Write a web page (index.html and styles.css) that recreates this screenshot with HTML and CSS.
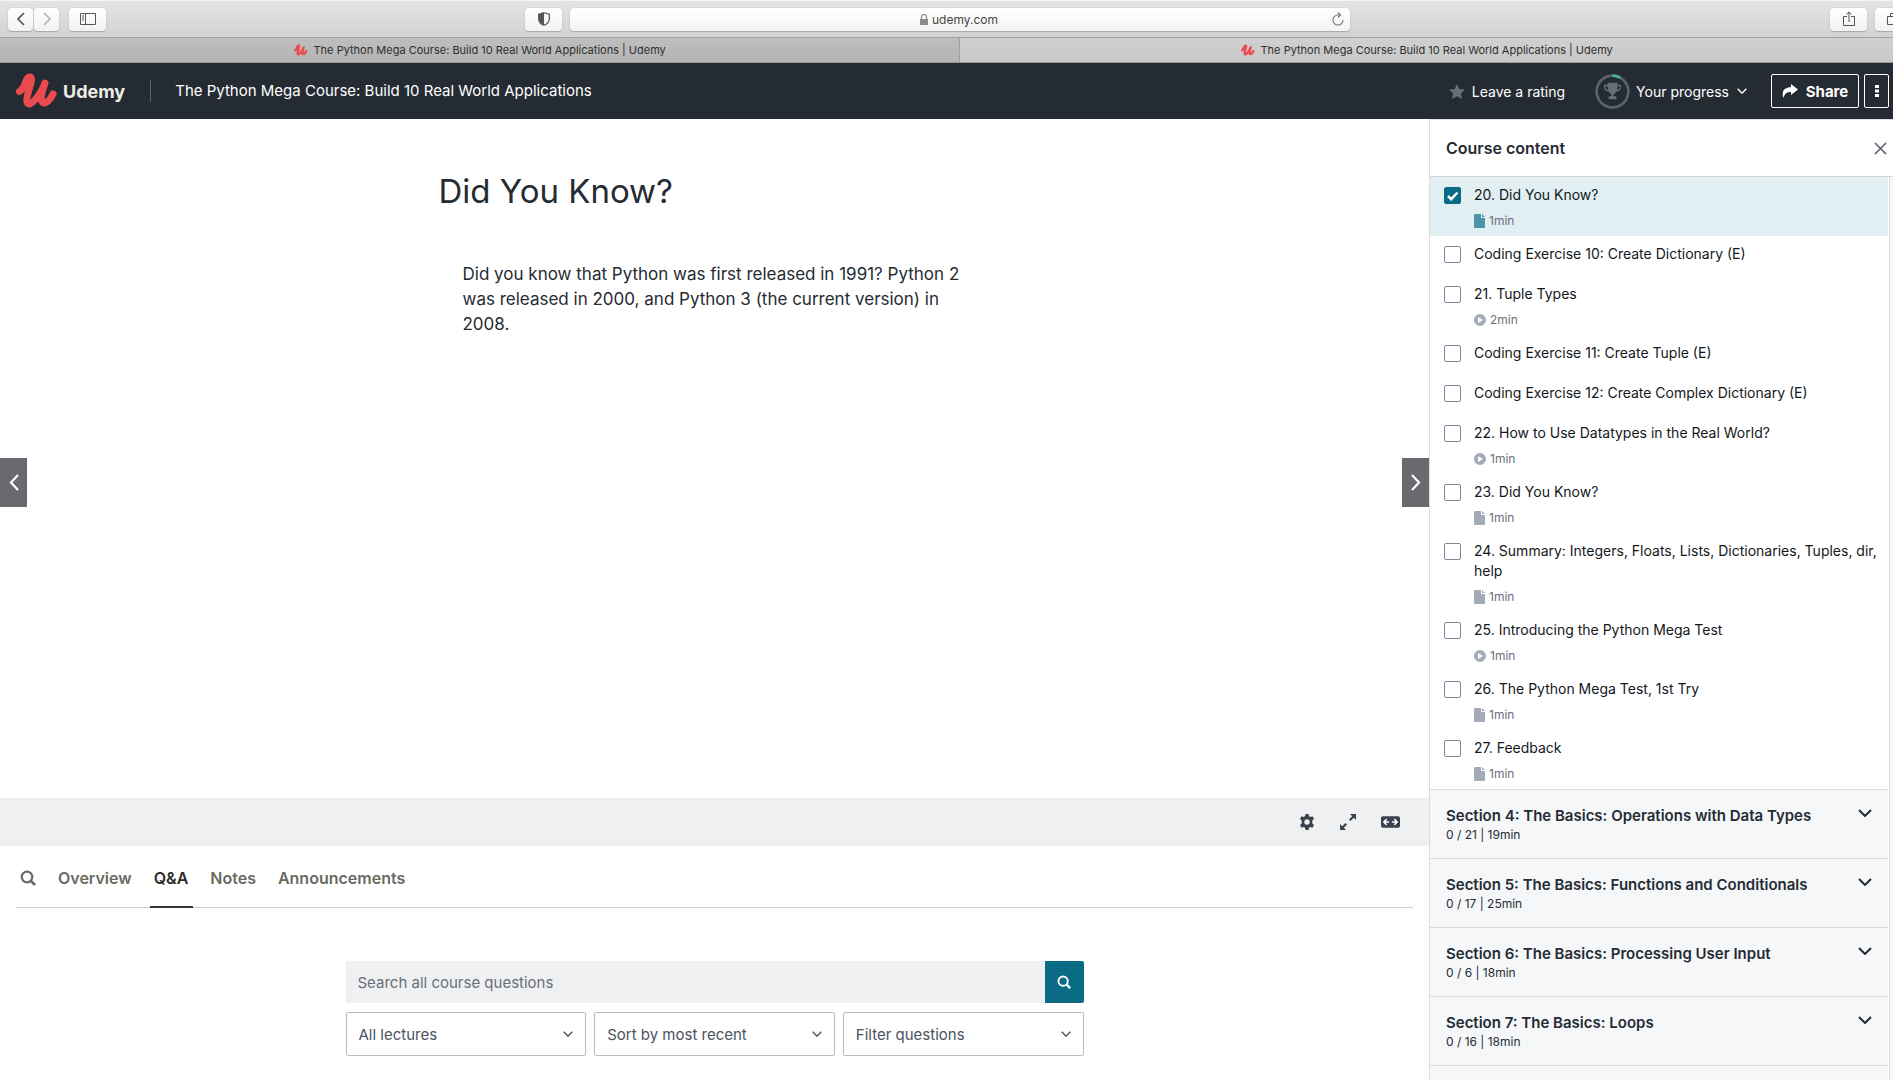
FILE: index.html
```html
<!DOCTYPE html>
<html lang="en">
<head>
<meta charset="utf-8">
<title>The Python Mega Course: Build 10 Real World Applications | Udemy</title>
<link rel="stylesheet" href="styles.css">
</head>
<body>
<svg class="sprite" aria-hidden="true">
  <symbol id="udemy-u" viewBox="0 0 42 36"><path d="M3.500 18.500C10 15 9 4 14 4c5 1-5 19-3 25 2 7 13-6 18-19-3 8-6 19-1 20 4 0 7-5 9-9" fill="none" stroke="#eb4a4e" stroke-width="7" stroke-linecap="round" stroke-linejoin="round"/></symbol>
  <symbol id="file" viewBox="0 0 11 14"><path d="M1 0h6v4h4v9q0 1-1 1H1q-1 0-1-1V1q0-1 1-1zM8 0l3 3H8z" fill="currentColor"/></symbol>
  <symbol id="play" viewBox="0 0 12 12"><path fill-rule="evenodd" d="M6 0a6 6 0 1 1 0 12A6 6 0 0 1 6 0zM4 3v6l5-3z" fill="currentColor"/></symbol>
  <symbol id="chevron" viewBox="0 0 14 8"><path d="M1 1l6 6 6-6" fill="none" stroke="currentColor" stroke-width="2"/></symbol>
  <symbol id="search" viewBox="0 0 16 16"><circle cx="7" cy="7" r="5.3" fill="none" stroke="currentColor" stroke-width="2.2"/><path d="M11 11l4 4" stroke="currentColor" stroke-width="2.6"/></symbol>
</svg>

<div class="toolbar">
  <div class="tools tools-left">
    <div class="pair">
      <button class="tool" aria-label="Back"><svg width="8" height="14" viewBox="0 0 8 14"><path d="M7 1L1 7l6 6" fill="none" stroke="#555" stroke-width="1.7"/></svg></button>
      <button class="tool" aria-label="Forward"><svg width="8" height="14" viewBox="0 0 8 14"><path d="M1 1l6 6-6 6" fill="none" stroke="#b4b4b4" stroke-width="1.7"/></svg></button>
    </div>
    <button class="tool tool-wide" aria-label="Show sidebar"><svg width="16" height="12" viewBox="0 0 16 12"><path d="M.5.5h15v11H.5zM5.500.5v11M2 3h2M2 5h2M2 7h2" fill="none" stroke="#555"/></svg></button>
  </div>
  <div class="tools tools-center">
    <button class="tool tool-wide" aria-label="Privacy report"><svg width="12" height="14" viewBox="0 0 12 14"><path d="M6 .7l5.300 1.600v5Q11 11.500 6 13.300 1 11.500.7 7.300v-5z" fill="none" stroke="#555" stroke-width="1.200"/><path d="M6 .7v12.600Q1 11.500.7 7.300v-5z" fill="#555"/></svg></button>
    <div class="address">
      <span class="site"><svg width="8" height="11" viewBox="0 0 8 11"><path d="M0 5h8v6H0z" fill="#8c8c8c"/><path d="M1.500 5V3a2.500 2.500 0 0 1 5 0v2" fill="none" stroke="#8c8c8c" stroke-width="1.200"/></svg>udemy.com</span>
      <button class="reload" aria-label="Reload"><svg width="12" height="14" viewBox="0 0 12 14"><path d="M11 8a5 5 0 1 1-5-5h2M6 .5L8.500 3 6 5.500" fill="none" stroke="#777" stroke-width="1.100"/></svg></button>
    </div>
  </div>
  <div class="tools tools-right">
    <button class="tool tool-wide" aria-label="Share page"><svg width="12" height="16" viewBox="0 0 12 16"><path d="M4 5.500H.5v9h11v-9H8M6 11V1M3.500 3.500L6 1l2.500 2.500" fill="none" stroke="#555"/></svg></button>
    <button class="tool tool-wide" aria-label="Show tabs"><svg width="14" height="14" viewBox="0 0 14 14"><path d="M.5 4.500h9v8h-9zM3.500 4.500v-3h9v8h-3" fill="none" stroke="#555"/></svg></button>
  </div>
</div>

<div class="tabs">
  <div class="tab tab-back"><svg class="favicon"><use href="#udemy-u"/></svg>The Python Mega Course: Build 10 Real World Applications | Udemy</div>
  <div class="tab tab-front"><svg class="favicon"><use href="#udemy-u"/></svg>The Python Mega Course: Build 10 Real World Applications | Udemy</div>
</div>

<header class="header">
  <a class="logo" href="#"><svg width="42" height="36"><use href="#udemy-u"/></svg>Udemy</a>
  <a class="course-name" href="#">The Python Mega Course: Build 10 Real World Applications</a>
  <button class="rate"><svg width="16" height="15" viewBox="0 0 16 15"><path d="M8 0l2.300 5 5.700.6-4.200 3.900L13 15l-5-2.800L3 15l1.200-5.500L0 5.600 5.700 5z" fill="#686f7a"/></svg>Leave a rating</button>
  <button class="progress">
    <svg width="35" height="35" viewBox="0 0 36 36"><circle cx="18" cy="18" r="16.300" fill="none" stroke="#5b626d" stroke-width="2.700"/><path d="M18 1.700a16.300 16.300 0 0 1 8 2.100" fill="none" stroke="#3fb984" stroke-width="2.700"/><path d="M13 9h10v2h4q0 7-5 7-1 2-3 3v2h3v3h-8v-3h3v-2q-2-1-3-3-5 0-5-7h4zM13 12.500h-2.500q.5 3.500 3 4zM23 12.500v4q2.500-.5 3-4z" fill="#686f7a" fill-rule="evenodd"/></svg>
    Your progress
    <svg class="chevron-small"><use href="#chevron"/></svg>
  </button>
  <div class="header-buttons">
    <button class="share"><svg width="16" height="14" viewBox="0 0 16 14"><path d="M9 0l7 5.500L9 11V8Q3 7 1.500 14-2 4 9 3z" fill="#fff"/></svg>Share</button>
    <button class="more" aria-label="More options"><svg width="4" height="12" viewBox="0 0 4 12"><path d="M0 0h4v3H0zM0 4.500h4v3H0zM0 9h4v3H0z" fill="#fff"/></svg></button>
  </div>
</header>

<div class="page">
  <main class="main">
    <section class="player">
      <article class="article">
        <h1>Did You Know?</h1>
        <p>Did you know that Python was first released in 1991? Python 2 was released in 2000, and Python 3 (the current version) in 2008.</p>
      </article>
      <button class="step step-prev" aria-label="Previous lecture"><svg width="10" height="17" viewBox="0 0 10 17"><path d="M9 1L2 8.500 9 16" fill="none" stroke="#fff" stroke-width="2.200"/></svg></button>
      <button class="step step-next" aria-label="Next lecture"><svg width="10" height="17" viewBox="0 0 10 17"><path d="M1 1l7 7.500L1 16" fill="none" stroke="#fff" stroke-width="2.200"/></svg></button>
      <div class="controls">
        <button aria-label="Settings"><svg width="16" height="16" viewBox="0 0 16 16"><path fill-rule="evenodd" d="M6.500 0h3l.5 2.200 1.300.8 2.200-.7 1.500 2.600L13.300 6.500v3l1.700 1.600-1.500 2.600-2.200-.7-1.300.8-.5 2.200h-3L6 13.800 4.700 13l-2.200.7L1 11.100l1.700-1.600v-3L1 4.900l1.500-2.600 2.200.7L6 2.200zM8 5.300a2.700 2.700 0 1 0 0 5.400 2.700 2.700 0 0 0 0-5.400z" fill="#3b424d"/></svg></button>
        <button aria-label="Fullscreen"><svg width="16" height="16" viewBox="0 0 16 16"><path d="M10 0h6v6l-2.200-2.200L10.500 7 9 5.500l3.200-3.300zM0 16v-6l2.200 2.200L5.500 9 7 10.500l-3.200 3.300L6 16z" fill="#3b424d"/></svg></button>
        <button aria-label="Expanded view"><svg width="19" height="12" viewBox="0 0 20 12"><rect width="20" height="12" rx="2" fill="#3b424d"/><path d="M3 6h5.500M11.500 6H17M6 3L3 6l3 3M14 3l3 3-3 3" fill="none" stroke="#fff" stroke-width="1.600"/></svg></button>
      </div>
    </section>

    <nav class="sections">
      <a href="#" aria-label="Search"><svg width="16" height="16"><use href="#search"/></svg></a>
      <a href="#">Overview</a>
      <a href="#" class="active">Q&amp;A</a>
      <a href="#">Notes</a>
      <a href="#">Announcements</a>
    </nav>

    <form class="questions">
      <div class="search">
        <input type="text" aria-label="Search all course questions" placeholder="Search all course questions">
        <button type="button" aria-label="Search"><svg width="14" height="14"><use href="#search"/></svg></button>
      </div>
      <div class="filters">
        <div class="select"><select aria-label="Lectures"><option>All lectures</option></select><svg><use href="#chevron"/></svg></div>
        <div class="select"><select aria-label="Sort order"><option>Sort by most recent</option></select><svg><use href="#chevron"/></svg></div>
        <div class="select"><select aria-label="Filter"><option>Filter questions</option></select><svg><use href="#chevron"/></svg></div>
      </div>
    </form>
  </main>

  <aside class="sidebar">
    <div class="sidebar-head"><h2>Course content</h2><button aria-label="Close"><svg width="13" height="13" viewBox="0 0 14 14"><path d="M1 1l12 12M13 1L1 13" stroke="#686f7a" stroke-width="1.800"/></svg></button></div>
    <div class="curriculum">
      <ul class="lectures">
        <li class="lecture current"><span class="tick"><input type="checkbox" id="l20" checked><svg viewBox="0 0 17 17"><path d="M4 9l3.200 3.200L13.500 5.500" fill="none" stroke="#fff" stroke-width="2.500"/></svg></span><div><label for="l20">20. Did You Know?</label><p class="meta"><svg class="file"><use href="#file"/></svg>1min</p></div></li>
        <li class="lecture"><span class="tick"><input type="checkbox" id="e10"></span><div><label for="e10">Coding Exercise 10: Create Dictionary (E)</label></div></li>
        <li class="lecture"><span class="tick"><input type="checkbox" id="l21"></span><div><label for="l21">21. Tuple Types</label><p class="meta"><svg class="play"><use href="#play"/></svg>2min</p></div></li>
        <li class="lecture"><span class="tick"><input type="checkbox" id="e11"></span><div><label for="e11">Coding Exercise 11: Create Tuple (E)</label></div></li>
        <li class="lecture"><span class="tick"><input type="checkbox" id="e12"></span><div><label for="e12">Coding Exercise 12: Create Complex Dictionary (E)</label></div></li>
        <li class="lecture"><span class="tick"><input type="checkbox" id="l22"></span><div><label for="l22">22. How to Use Datatypes in the Real World?</label><p class="meta"><svg class="play"><use href="#play"/></svg>1min</p></div></li>
        <li class="lecture"><span class="tick"><input type="checkbox" id="l23"></span><div><label for="l23">23. Did You Know?</label><p class="meta"><svg class="file"><use href="#file"/></svg>1min</p></div></li>
        <li class="lecture"><span class="tick"><input type="checkbox" id="l24"></span><div><label for="l24">24. Summary: Integers, Floats, Lists, Dictionaries, Tuples, dir, help</label><p class="meta"><svg class="file"><use href="#file"/></svg>1min</p></div></li>
        <li class="lecture"><span class="tick"><input type="checkbox" id="l25"></span><div><label for="l25">25. Introducing the Python Mega Test</label><p class="meta"><svg class="play"><use href="#play"/></svg>1min</p></div></li>
        <li class="lecture"><span class="tick"><input type="checkbox" id="l26"></span><div><label for="l26">26. The Python Mega Test, 1st Try</label><p class="meta"><svg class="file"><use href="#file"/></svg>1min</p></div></li>
        <li class="lecture"><span class="tick"><input type="checkbox" id="l27"></span><div><label for="l27">27. Feedback</label><p class="meta"><svg class="file"><use href="#file"/></svg>1min</p></div></li>
      </ul>
      <button class="chapter"><span><strong>Section 4: The Basics: Operations with Data Types</strong><small>0 / 21 | 19min</small></span><svg><use href="#chevron"/></svg></button>
      <button class="chapter"><span><strong>Section 5: The Basics: Functions and Conditionals</strong><small>0 / 17 | 25min</small></span><svg><use href="#chevron"/></svg></button>
      <button class="chapter"><span><strong>Section 6: The Basics: Processing User Input</strong><small>0 / 6 | 18min</small></span><svg><use href="#chevron"/></svg></button>
      <button class="chapter"><span><strong>Section 7: The Basics: Loops</strong><small>0 / 16 | 18min</small></span><svg><use href="#chevron"/></svg></button>
      <div class="chapter"></div>
    </div>
  </aside>
</div>
</body>
</html>
```
FILE: styles.css
```css
* { box-sizing: border-box; }

body {
  margin: 0;
  height: 100vh;
  overflow: hidden;
  display: flex;
  flex-direction: column;
  font-family: Inter, "Liberation Sans", sans-serif;
  color: #252b33;
  background: #fff;
}

button, input, select { font: inherit; color: inherit; }
button { border: 0; padding: 0; background: none; cursor: pointer; }
a { color: inherit; text-decoration: none; }
h1, h2, p, ul { margin: 0; padding: 0; }
svg { display: block; flex: none; }
.sprite { position: absolute; width: 0; height: 0; }

/* Browser chrome */
.toolbar {
  flex: none;
  display: grid;
  grid-template-columns: 175fr 275fr 181fr;
  height: 38px;
  border-top: 1px solid #f4f4f4;
  border-bottom: 1px solid #a3a3a3;
  background: linear-gradient(#e4e4e4, #d2d2d2);
}
.tools { display: flex; align-items: center; min-width: 0; }
.tools-left { padding-left: 8px; gap: 10px; }
.tools-center { gap: 8px; }
.tools-right { justify-content: flex-end; gap: 8px; margin-right: -19px; }
.pair { display: flex; gap: 1px; }
.tool {
  display: grid;
  place-items: center;
  width: 25px;
  height: 23px;
  border-radius: 4px;
  background: linear-gradient(#fff, #f2f2f2);
  box-shadow: 0 0 1px #999, 0 1px 1px #aaa;
}
.tool-wide { flex: none; width: 37px; }
.address {
  flex: 1;
  display: flex;
  align-items: center;
  height: 23px;
  padding: 0 6px 0 16px;
  border-radius: 4px;
  background: linear-gradient(#fff, #f4f4f4);
  box-shadow: 0 0 1px #999, 0 1px 1px #aaa;
  font-size: 12px;
  color: #444;
}
.site { flex: 1; display: flex; align-items: center; justify-content: center; gap: 4px; }

.tabs {
  flex: none;
  display: flex;
  height: 25px;
  border-bottom: 1px solid #999;
  font-size: 11px;
  color: #2e2e2e;
}
.tab { display: flex; align-items: center; justify-content: center; gap: 6px; min-width: 0; white-space: nowrap; }
.tab-back { flex: 36; background: linear-gradient(#bebebe, #b4b4b4); border-right: 1px solid #a0a0a0; }
.tab-front { flex: 35; background: linear-gradient(#d0d0d0, #c8c8c8); }
.favicon { width: 14px; height: 12px; }

/* Course header */
.header {
  flex: none;
  display: flex;
  align-items: center;
  height: 56px;
  padding: 0 4px 0 16px;
  background: #252b33;
  color: #fff;
  font-size: 14px;
}
.logo { display: flex; align-items: center; gap: 5px; font-size: 18px; font-weight: 700; color: #eeece6; }
.course-name { flex: 1; margin-left: 25px; padding-left: 24px; border-left: 1px solid #5a616b; font-size: 15px; line-height: 22px; }
.rate { display: flex; align-items: center; gap: 7px; }
.progress { display: flex; align-items: center; gap: 6px; margin: 0 24px 0 30px; }
.chevron-small { width: 10px; height: 6px; margin-left: 2px; }
.header-buttons { display: flex; gap: 5px; }
.share, .more { display: flex; align-items: center; justify-content: center; height: 34px; border: 1px solid #fff; border-radius: 2px; }
.share { gap: 8px; width: 88px; font-size: 15px; font-weight: 700; }
.more { width: 25px; }

.page { flex: 1; display: flex; min-height: 0; }
.main { flex: 1; min-width: 0; overflow: hidden; }

/* Lecture player */
.player {
  position: relative;
  display: flex;
  flex-direction: column;
  min-height: calc(100vh - 353px);
}
.article { flex: 1; width: 552px; margin: 0 auto; padding-top: 50px; }
.article h1 { font-size: 33px; font-weight: 400; line-height: 44px; }
.article p { margin: 49px 24px 0; font-size: 17px; line-height: 25px; }
.step {
  position: absolute;
  top: calc(50% - 25px);
  display: grid;
  place-items: center;
  width: 27px;
  height: 49px;
  background: #686a70;
}
.step-prev { left: 0; }
.step-next { right: 0; }
.controls {
  display: flex;
  align-items: center;
  justify-content: flex-end;
  gap: 25px;
  height: 48px;
  padding-right: 29px;
  background: #eff0f2;
}

/* Section tabs */
.sections {
  display: flex;
  gap: 13px;
  margin: 0 16px;
  border-bottom: 1px solid #d0d2c6;
  font-size: 16px;
  font-weight: 600;
  color: #6a6a62;
}
.sections a { display: flex; align-items: center; height: 62px; margin-bottom: -1px; padding: 4px 5px 0 4px; border-bottom: 2px solid transparent; }
.sections .active { color: #2e2c29; border-color: #38342f; }

/* Question search */
.questions { width: 738px; margin: 53px auto 0; color: #4b5260; font-size: 15px; }
.search { display: flex; }
.search input { flex: 1; min-width: 0; height: 42px; padding: 0 12px; border: 0; background: #eff0f2; }
.search input::placeholder { color: #686f7a; opacity: 1; }
.search button { display: grid; place-items: center; width: 39px; height: 42px; border-radius: 0 2px 2px 0; background: #0a6c84; color: #fff; }
.filters { display: flex; gap: 8px; margin-top: 9px; }
.select { flex: 1; display: grid; align-items: center; }
.select select { grid-area: 1 / 1; width: 100%; height: 44px; padding: 0 12px; appearance: none; border: 1px solid #bcbcbc; border-radius: 2px; background: #fff; }
.select svg { grid-area: 1 / 1; justify-self: end; width: 10px; height: 6px; margin-right: 13px; pointer-events: none; }

/* Course content */
.sidebar { flex: none; display: flex; flex-direction: column; width: 464px; border-left: 1px solid #dcdcdc; background: #f8f8f8; }
.sidebar-head { flex: none; display: flex; align-items: center; justify-content: space-between; height: 58px; padding: 0 6px 0 16px; border-bottom: 1px solid #d2d4d6; border-top: 1px solid #dedfe1; background: #fff; }
.sidebar-head h2 { font-size: 16px; font-weight: 600; }
.curriculum { flex: 1; min-height: 0; overflow: hidden; margin-right: 3px; padding-right: 1px; border-right: 1px solid #e0e0e0; background: #fff; }
.lectures { list-style: none; }
.lecture { display: flex; gap: 13px; min-height: 40px; padding: 8px 4px 5px 14px; font-size: 14px; line-height: 20px; color: #14171c; }
.lecture > div { flex: 1; min-width: 0; }
.lecture label { display: block; }
.current { background: #e1eef2; }
.tick { flex: none; display: grid; width: 17px; height: 17px; margin-top: 2px; }
.tick input { grid-area: 1 / 1; appearance: none; margin: 0; border: 1px solid #7f8798; border-radius: 2px; background: #fff; }
.tick input:checked { border-color: #0a6c84; background: #0a6c84; }
.tick svg { grid-area: 1 / 1; position: relative; pointer-events: none; }
.meta { display: flex; align-items: center; gap: 4px; margin-top: 6px; font-size: 12px; color: #686f7a; }
.meta svg { color: #a3aab8; }
.current .meta svg { color: #4a94a5; }
.file { width: 11px; height: 14px; }
.play { width: 12px; height: 12px; }
.chapter {
  display: flex;
  justify-content: space-between;
  width: 100%;
  height: 69px;
  padding: 16px 16px 0;
  border-top: 1px solid #d8dadd;
  background: #f5f7f9;
  text-align: left;
}
.chapter span { display: flex; flex-direction: column; }
.chapter strong { font-size: 15px; font-weight: 600; line-height: 20px; }
.chapter small { font-size: 12px; line-height: 18px; }
.chapter svg { width: 14px; height: 8px; margin-top: 3px; }
```
